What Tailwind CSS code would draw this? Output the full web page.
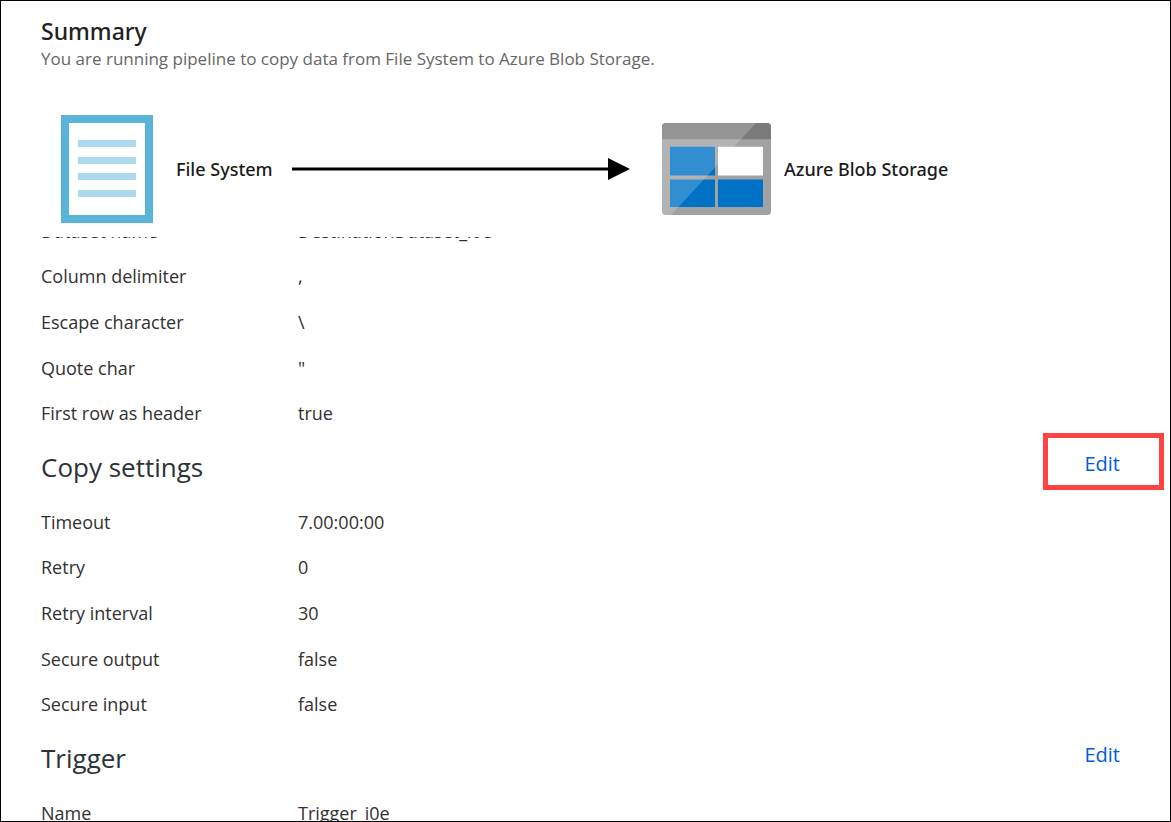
<!DOCTYPE html>
<html lang="en">
<head>
<meta charset="utf-8">
<meta name="viewport" content="width=device-width, initial-scale=1">
<title>Summary</title>
<script src="https://cdn.jsdelivr.net/npm/@tailwindcss/browser@4"></script>
</head>
<body class="flex h-screen flex-col overflow-hidden border border-black bg-white font-['Open_Sans','Noto_Sans',sans-serif] text-lg text-[#323130]">
  <header class="px-10 pt-4">
    <h1 class="font-['Noto_Sans',sans-serif] text-[23px] leading-7 font-medium text-[#212121]">Summary</h1>
    <p class="text-[17px] leading-7 text-[#666666]">You are running pipeline to copy data from File System to Azure Blob Storage.</p>
  </header>

  <section class="flex h-[164px] shrink-0 items-center pt-7 pl-[60px] font-['Noto_Sans',sans-serif] font-medium text-[#1b1b1b]" aria-label="Data flow">
    <svg class="h-[108px] w-[92px] shrink-0" viewBox="0 0 92 108" aria-hidden="true">
      <rect width="92" height="108" fill="#59b4d9"/>
      <rect x="8" y="8" width="76" height="92" fill="#fff"/>
      <path d="M17 25h58v7H17zM17 42h58v7H17zM17 58h58v7H17zM17 75h58v7H17z" fill="#abdaec"/>
    </svg>
    <span class="ml-[23px] w-[116px] shrink-0 whitespace-nowrap">File System</span>
    <svg class="h-[22px] w-[338px] shrink-0" viewBox="0 0 338 22" aria-hidden="true">
      <path d="M0 9.500h317v3H0zM316 0l22 11l-22 11z" fill="#000"/>
    </svg>
    <svg class="ml-8 h-[92px] w-[109px] shrink-0" viewBox="0 0 109 93" preserveAspectRatio="none" aria-hidden="true">
      <rect width="109" height="93" rx="4" fill="#a0a1a2"/>
      <path d="M4 0h101a4 4 0 0 1 4 4v12.500H0V4a4 4 0 0 1 4-4z" fill="#7a7a7a"/>
      <path d="M8 24h45v29H8zM8 57h45v28H8zM56 57h45v28H56z" fill="#0072c6"/>
      <path d="M4 0h90L9 93H4a4 4 0 0 1-4-4V4a4 4 0 0 1 4-4z" fill="#fff" fill-opacity=".2"/>
      <path d="M56 24h45v29H56z" fill="#fff"/>
    </svg>
    <span class="ml-[13px] whitespace-nowrap">Azure Blob Storage</span>
  </section>

  <main class="min-h-0 flex-1 overflow-hidden pl-10">
    <section class="-mt-[29px]">
      <table class="h-[228px] w-full table-fixed text-left">
        <colgroup><col class="w-[257px]"><col></colgroup>
        <tbody>
          <tr><th scope="row" class="font-normal">Dataset name</th><td>DestinationDataset_i0e</td></tr>
          <tr><th scope="row" class="font-normal">Column delimiter</th><td>,</td></tr>
          <tr><th scope="row" class="font-normal">Escape character</th><td>\</td></tr>
          <tr><th scope="row" class="font-normal">Quote char</th><td>"</td></tr>
          <tr><th scope="row" class="font-normal">First row as header</th><td>true</td></tr>
        </tbody>
      </table>
    </section>

    <section>
      <div class="flex h-[63px] items-center justify-between pr-[50px]">
        <h2 class="pb-0.5 text-[26px] leading-8 text-[#2b3138]">Copy settings</h2>
        <div class="relative pb-2">
          <button type="button" class="text-xl text-[#015cda]">Edit</button>
          <div class="pointer-events-none absolute -top-[17px] -right-11 h-[57px] w-[121px] border-5 border-[#ff4343]"></div>
        </div>
      </div>
      <table class="h-[228px] w-full table-fixed text-left">
        <colgroup><col class="w-[257px]"><col></colgroup>
        <tbody>
          <tr><th scope="row" class="font-normal">Timeout</th><td>7.00:00:00</td></tr>
          <tr><th scope="row" class="font-normal">Retry</th><td>0</td></tr>
          <tr><th scope="row" class="font-normal">Retry interval</th><td>30</td></tr>
          <tr><th scope="row" class="font-normal">Secure output</th><td>false</td></tr>
          <tr><th scope="row" class="font-normal">Secure input</th><td>false</td></tr>
        </tbody>
      </table>
    </section>

    <section>
      <div class="flex h-[63px] items-center justify-between pr-[50px]">
        <h2 class="pb-0.5 text-[26px] leading-8 text-[#2b3138]">Trigger</h2>
        <div class="pb-2">
          <button type="button" class="text-xl text-[#015cda]">Edit</button>
        </div>
      </div>
      <table class="h-[46px] w-full table-fixed text-left">
        <colgroup><col class="w-[257px]"><col></colgroup>
        <tbody>
          <tr><th scope="row" class="font-normal">Name</th><td>Trigger_i0e</td></tr>
        </tbody>
      </table>
    </section>
  </main>
</body>
</html>
